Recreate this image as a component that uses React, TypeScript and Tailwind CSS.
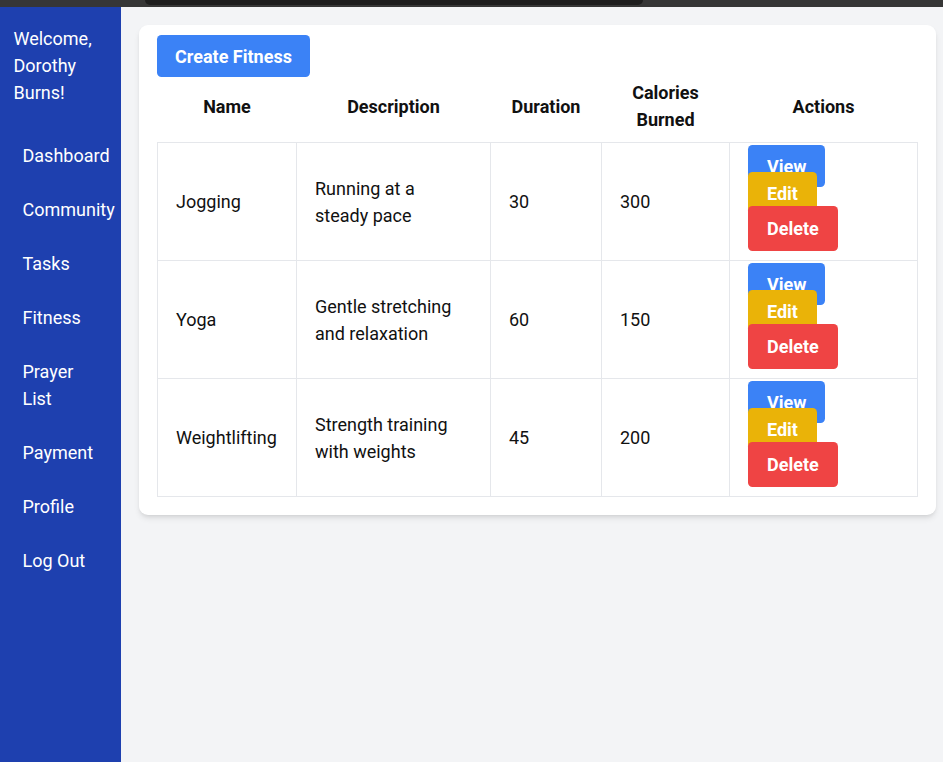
import React from "react";

const rows = [
  { name: "Jogging", desc: "Running at a steady pace", dur: "30", cal: "300" },
  { name: "Yoga", desc: "Gentle stretching and relaxation", dur: "60", cal: "150" },
  { name: "Weightlifting", desc: "Strength training with weights", dur: "45", cal: "200" },
];

const nav = ["Dashboard", "Community", "Tasks", "Fitness", "Prayer List", "Payment", "Profile", "Log Out"];

export default function App() {
  return (
    <div className="h-[762px] w-[943px] overflow-hidden flex flex-col font-['Roboto','Noto_Sans',sans-serif] text-[18px] leading-[27px] text-[#111]">
      <div className="h-[7px] shrink-0 bg-[#363636]">
        <div className="ml-[145px] w-[498px] h-[5px] bg-[#1e1e1e] rounded-b-md" />
      </div>
      <div className="flex flex-1 min-h-0">
        <aside className="w-[121px] shrink-0 bg-[#1e40af] text-white px-[13.5px] pt-[18px]">
          <h2 className="mb-[22px]">Welcome, Dorothy Burns!</h2>
          <nav>
            <ul>
              {nav.map((n) => (
                <li key={n} className="px-[9px] py-[13.5px] whitespace-normal">
                  {n}
                </li>
              ))}
            </ul>
          </nav>
        </aside>
        <main className="flex-1 bg-[#f3f4f6] pt-[18px] pl-[18px] pr-[8px]">
          <div className="bg-white rounded-[9px] shadow-md p-[18px]">
            <div>
              <a className="relative top-[-1px] bg-[#3b82f6] text-white font-bold px-[18px] py-[10.5px] rounded-[4.5px]">Create Fitness</a>
            </div>
            <table className="w-full table-fixed border-collapse">
              <thead>
                <tr>
                  <th className="w-[139px] px-[18px] py-[9px] font-bold text-center">Name</th>
                  <th className="w-[194px] px-[18px] py-[9px] font-bold text-center">Description</th>
                  <th className="w-[111px] px-[18px] py-[9px] font-bold text-center">Duration</th>
                  <th className="w-[128px] px-[18px] py-[9px] font-bold text-center">Calories Burned</th>
                  <th className="w-[188px] px-[18px] py-[9px] font-bold text-center">Actions</th>
                </tr>
              </thead>
              <tbody>
                {rows.map((r) => (
                  <tr key={r.name}>
                    <td className="border border-[#e5e7eb] px-[18px] py-[9px] align-middle">{r.name}</td>
                    <td className="border border-[#e5e7eb] px-[18px] py-[9px] align-middle">{r.desc}</td>
                    <td className="border border-[#e5e7eb] px-[18px] py-[9px] align-middle">{r.dur}</td>
                    <td className="border border-[#e5e7eb] px-[18px] py-[9px] align-middle">{r.cal}</td>
                    <td className="border border-[#e5e7eb] px-[18px] py-[9px] align-middle">
                      <a className="bg-[#3b82f6] text-white font-bold px-[19px] py-[10.5px] rounded-[4.5px] mr-[9px]">View</a>
                      <br />
                      <a className="bg-[#eab308] text-white font-bold px-[19px] py-[10.5px] rounded-[4.5px] mr-[9px]">Edit</a>
                      <br />
                      <button className="bg-[#ef4444] text-white font-bold px-[19px] py-[9px] rounded-[4.5px]">Delete</button>
                    </td>
                  </tr>
                ))}
              </tbody>
            </table>
          </div>
        </main>
      </div>
    </div>
  );
}
